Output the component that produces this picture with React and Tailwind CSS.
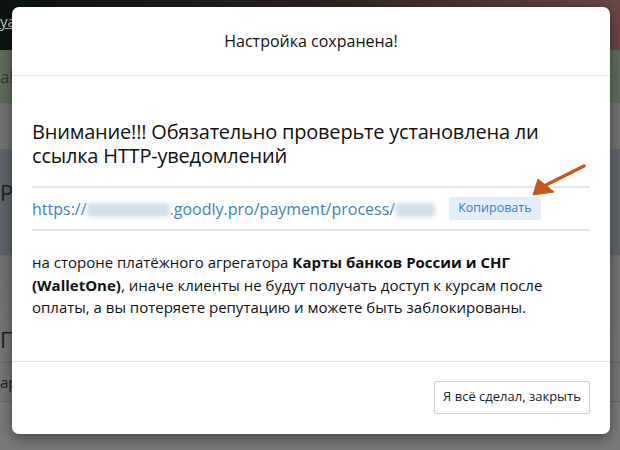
import React from 'react'

function Backdrop() {
  return (
    <div className="flex flex-col h-[450px] bg-[#737373] font-['Open_Sans',sans-serif]">
      <div className="h-[50px] bg-gradient-to-r from-[#0c1411] via-[#2a2220] to-[#6c4644] text-[#c9c9c9] text-[15px] pt-[10px] pl-0">
        <span className="underline">ya</span>
      </div>
      <div className="h-[53px] bg-[#5f6c5a] text-[#2b3b28] text-[17px] flex items-center">а!</div>
      <div className="h-[47px] bg-[#727272] border-b border-[#666]" />
      <div className="h-[105px] bg-[#5f656c] flex items-center pb-[20px] text-[#222] text-[22px]">Р</div>
      <div className="h-[107px] bg-gradient-to-b from-[#727272] to-[#767676] flex items-end text-[#222] text-[22px] pb-[6px]">П</div>
      <div className="h-[40px] border-y border-[#666] bg-[#767676] flex items-center text-[#222] text-[15px]">арт</div>
      <div className="flex-1 bg-[#7a7a7a]" />
    </div>
  )
}

function Blurred({ w }) {
  return <span className="inline-block align-middle h-[14px] bg-[#d3dfeb] blur-[2px] rounded-sm" style={{ width: w }} />
}

export default function App() {
  return (
    <div className="relative w-[620px] h-[450px] overflow-hidden">
      <Backdrop />

      {/* modal */}
      <div className="absolute left-[12px] top-[7px] w-[598px] bg-white rounded-[7px] shadow-[0_4px_14px_rgba(0,0,0,0.45)] font-['Open_Sans',sans-serif] text-[#111]">
        <div className="h-[69px] flex items-center justify-center border-b border-[#e3e3e3] text-[16px]">
          Настройка сохранена!
        </div>

        <div className="px-[20px] pt-[44px] pb-[42px]">
          <h3 className="text-[20px] leading-[24px] tracking-[-0.2px]">
            Внимание!!! Обязательно проверьте установлена ли ссылка HTTP-уведомлений
          </h3>
          <div className="mt-[18px] h-[45px] border-y-2 border-[#dbe8f5] flex items-center gap-[14px]">
            <span className="text-[16px] text-[#3f7fbd]">
              https://<Blurred w="83px" />.goodly.pro/payment/process/<Blurred w="40px" />
            </span>
            <button className="h-[23px] px-[9px] rounded-[3px] bg-[#e2eefa] text-[#3d7cc0] text-[12.5px]">
              Копировать
            </button>
          </div>
          <p className="mt-[20px] text-[15px] leading-[22.5px]">
            на стороне платёжного агрегатора <b>Карты банков России и СНГ (WalletOne)</b>, иначе клиенты не будут получать доступ к курсам после оплаты, а вы потеряете репутацию и можете быть заблокированы.
          </p>
        </div>

        <div className="border-t border-[#e3e3e3] flex justify-end px-[20px] pt-[19px] pb-[20px]">
          <button className="h-[33px] w-[156px] border border-[#cfcfcf] rounded-[2px] bg-white text-[13px] text-[#222]">
            Я всё сделал, закрыть
          </button>
        </div>
      </div>

      {/* annotation arrow */}
      <svg className="absolute left-[528px] top-[162px]" width="62" height="38" viewBox="0 0 62 38">
        <line x1="56" y1="4" x2="16" y2="24" stroke="#c65a1c" strokeWidth="3.5" strokeLinecap="round" />
        <polygon points="5,33 10,17 26,30" fill="#c65a1c" strokeLinejoin="round" stroke="#c65a1c" strokeWidth="1" />
      </svg>
    </div>
  )
}
